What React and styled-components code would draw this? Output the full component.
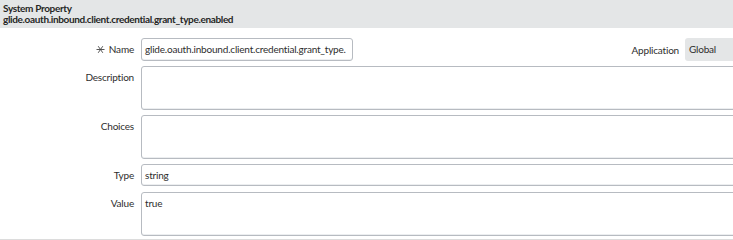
import React from "react";
import styled, { createGlobalStyle } from "styled-components";

const Global = createGlobalStyle`
  html, body { margin: 0; padding: 0; background: #fff; overflow: hidden; }
  body { font-family: Lato, "Open Sans", Arial, sans-serif; color: #2e2e2e; }
`;

const Page = styled.div`
  width: 733px;
  height: 240px;
  overflow: hidden;
  background: #fff;
`;

const Header = styled.div`
  background: #e4e6e7;
  height: 28px;
  padding: 3px 0 0 3px;
  box-sizing: border-box;
  font-size: 10px;
  line-height: 11px;
  font-weight: 700;
  letter-spacing: -0.35px;
  color: #262626;
`;

const Form = styled.div`
  width: 790px;
  padding-top: 10px;
  display: flex;
  flex-direction: column;
  gap: 5px;
  border-bottom: 1px solid #dcdcdc;
  padding-bottom: 3px;
`;

const Row = styled.div`
  display: grid;
  grid-template-columns: 134px 1fr;
  column-gap: 7px;
  align-items: start;
`;

const Label = styled.label`
  font-size: 10px;
  line-height: 23px;
  letter-spacing: -0.2px;
  text-align: right;
  color: #2e2e2e;
  display: flex;
  justify-content: flex-end;
  align-items: center;
  gap: 4px;
`;

const Field = styled.div`
  box-sizing: border-box;
  height: ${(p) => p.$h}px;
  width: ${(p) => (p.$w ? p.$w + "px" : "auto")};
  border: 1px solid #b7bbc1;
  border-radius: 3px;
  background: #fff;
  font-size: 10px;
  line-height: 13px;
  letter-spacing: -0.2px;
  padding: 4px 3px;
  color: #2e2e2e;
  white-space: nowrap;
  overflow: hidden;
  box-shadow: inset 0 -1px 0 #eceef0;
`;

const NameLine = styled.div`
  display: flex;
  align-items: center;
`;

const Spacer = styled.div`
  flex: 1;
`;

const AppLabel = styled.span`
  font-size: 10px;
  letter-spacing: -0.2px;
  margin-right: 6px;
  color: #2e2e2e;
`;

const AppValue = styled.div`
  box-sizing: border-box;
  height: 23px;
  width: 105px;
  background: #e4e6e7;
  border-radius: 3px 0 0 3px;
  font-size: 10px;
  letter-spacing: -0.2px;
  line-height: 23px;
  padding-left: 4px;
  color: #2e2e2e;
`;

const Required = () => (
  <svg width="9" height="9" viewBox="0 0 9 9" fill="none" stroke="#444" strokeWidth="0.9">
    <line x1="0.5" y1="4.5" x2="8.5" y2="4.5" />
    <line x1="2.2" y1="1.2" x2="6.8" y2="7.8" />
    <line x1="6.8" y1="1.2" x2="2.2" y2="7.8" />
  </svg>
);

export default function App() {
  return (
    <Page>
      <Global />
      <Header>
        <div>System Property</div>
        <div>glide.oauth.inbound.client.credential.grant_type.enabled</div>
      </Header>
      <Form>
        <Row>
          <Label>
            <Required />
            Name
          </Label>
          <NameLine>
            <Field $h={23} $w={212}>glide.oauth.inbound.client.credential.grant_type.</Field>
            <Spacer />
            <AppLabel>Application</AppLabel>
            <AppValue>Global</AppValue>
          </NameLine>
        </Row>
        <Row>
          <Label>Description</Label>
          <Field $h={44} />
        </Row>
        <Row>
          <Label>Choices</Label>
          <Field $h={44} />
        </Row>
        <Row>
          <Label>Type</Label>
          <Field $h={22}>string</Field>
        </Row>
        <Row>
          <Label>Value</Label>
          <Field $h={44}>true</Field>
        </Row>
      </Form>
    </Page>
  );
}
